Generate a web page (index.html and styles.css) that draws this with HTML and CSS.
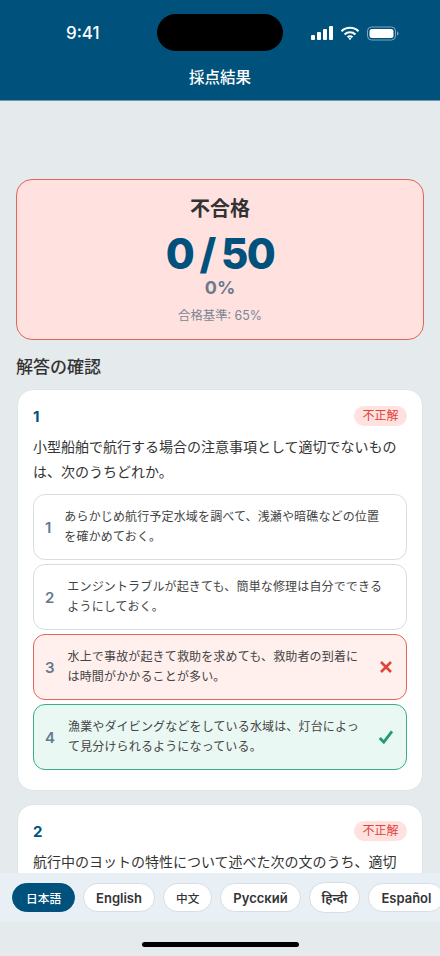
FILE: index.html
```html
<!DOCTYPE html>
<html lang="ja">
<head>
    <meta charset="UTF-8">
    <meta name="viewport" content="width=device-width, initial-scale=1.0">
    <title>採点結果</title>
    <link rel="stylesheet" href="styles.css">
</head>
<body>
    <div class="screen">
        <header class="app-header">
            <div class="status-bar">
                <span class="status-time">9:41</span>
                <div class="island"></div>
                <div class="status-icons">
                    <svg width="22" height="14" viewBox="0 0 22 14"><rect x="0" y="9" width="4" height="5" rx="1" fill="#fff"/><rect x="6" y="6" width="4" height="8" rx="1" fill="#fff"/><rect x="12" y="3" width="4" height="11" rx="1" fill="#fff"/><rect x="18" y="0" width="4" height="14" rx="1" fill="#fff"/></svg>
                    <svg width="20" height="15" viewBox="0 0 20 15"><path d="M1.5 5.2a12.2 12.2 0 0 1 17 0M4.6 8.4a7.8 7.8 0 0 1 10.8 0M7.6 11.3a3.4 3.4 0 0 1 4.8 0" fill="none" stroke="#fff" stroke-width="2.1"/><path d="M8.6 12.4a2 2 0 0 1 2.8 0L10 14.2z" fill="#fff"/></svg>
                    <svg width="32" height="15" viewBox="0 0 32 15"><rect x="0.5" y="1" width="28" height="13" rx="4" fill="none" stroke="#7fa6bd"/><rect x="2.5" y="3" width="24" height="9" rx="2.5" fill="#fff"/><path d="M30 5.5c1 .3 1.5 1 1.5 2s-.5 1.7-1.5 2z" fill="#7fa6bd"/></svg>
                </div>
            </div>
            <h1 class="app-title">採点結果</h1>
        </header>

        <main class="content">
            <section class="result-card">
                <h2 class="result-label">不合格</h2>
                <div class="result-score">0 / 50</div>
                <div class="result-percent">0%</div>
                <div class="result-note">合格基準: 65%</div>
            </section>

            <h3 class="section-title">解答の確認</h3>

            <article class="question">
                <div class="question-head">
                    <span class="question-no">1</span>
                    <span class="badge">不正解</span>
                </div>
                <p class="question-text">小型船舶で航行する場合の注意事項として適切でないものは、次のうちどれか。</p>
                <div class="choices">
                    <div class="choice">
                        <span class="choice-no">1</span>
                        <span class="choice-text">あらかじめ航行予定水域を調べて、浅瀬や暗礁などの位置を確かめておく。</span>
                    </div>
                    <div class="choice">
                        <span class="choice-no">2</span>
                        <span class="choice-text">エンジントラブルが起きても、簡単な修理は自分でできるようにしておく。</span>
                    </div>
                    <div class="choice wrong">
                        <span class="choice-no">3</span>
                        <span class="choice-text">水上で事故が起きて救助を求めても、救助者の到着には時間がかかることが多い。</span>
                        <svg class="mark" width="16" height="16" viewBox="0 0 16 16"><path d="M3 3l10 10M13 3L3 13" fill="none" stroke="#e04438" stroke-width="2.6"/></svg>
                    </div>
                    <div class="choice correct">
                        <span class="choice-no">4</span>
                        <span class="choice-text">漁業やダイビングなどをしている水域は、灯台によって見分けられるようになっている。</span>
                        <svg class="mark" width="16" height="16" viewBox="0 0 16 16"><path d="M1.8 9l4 4.2L14 2.4" fill="none" stroke="#1f9d68" stroke-width="2.8"/></svg>
                    </div>
                </div>
            </article>

            <article class="question">
                <div class="question-head">
                    <span class="question-no">2</span>
                    <span class="badge">不正解</span>
                </div>
                <p class="question-text">航行中のヨットの特性について述べた次の文のうち、適切</p>
            </article>
        </main>

        <nav class="lang-bar">
            <span class="lang active cjk">日本語</span>
            <span class="lang">English</span>
            <span class="lang cjk">中文</span>
            <span class="lang">Русский</span>
            <span class="lang tall">हिन्दी</span>
            <span class="lang">Español</span>
        </nav>
        <div class="home-area"><div class="home-indicator"></div></div>
    </div>
</body>
</html>
```

FILE: styles.css
```css
* {
    box-sizing: border-box;
}
html, body {
    margin: 0;
    padding: 0;
}
body {
    font-family: Inter, "Noto Sans CJK JP", "Noto Sans", sans-serif;
    color: #333;
    background-color: #e5eaed;
}
.screen {
    width: 440px;
    height: 956px;
    display: flex;
    flex-direction: column;
    overflow: hidden;
}
.app-header {
    height: 101px;
    flex-shrink: 0;
    background-color: #00527c;
    border-bottom: 1px solid #6d97ad;
    color: #fff;
}
.status-bar {
    height: 64px;
    padding: 2px 41px 0 66px;
    display: flex;
    justify-content: space-between;
    align-items: center;
    position: relative;
}
.status-time {
    font-size: 17px;
    font-weight: 500;
}
.island {
    position: absolute;
    left: 157px;
    top: 14px;
    width: 126px;
    height: 37px;
    border-radius: 19px;
    background-color: #000;
}
.status-icons {
    display: flex;
    align-items: center;
    gap: 7px;
}
.app-title {
    margin: 0;
    font-size: 15.5px;
    font-weight: 500;
    line-height: 28px;
    text-align: center;
}
.content {
    flex: 1;
    min-height: 0;
    overflow: hidden;
    padding: 78px 16px 0;
}
.result-card {
    height: 161px;
    padding: 14px 16px;
    text-align: center;
    background-color: #ffe2df;
    border: 1px solid #e0655a;
    border-radius: 16px;
}
.result-label {
    margin: 0;
    font-size: 20px;
    font-weight: 700;
    line-height: 30px;
}
.result-score {
    margin-top: 7px;
    font-size: 42px;
    font-weight: 800;
    letter-spacing: -1.5px;
    word-spacing: -1.5px;
    line-height: 46px;
    color: #00527c;
}
.result-percent {
    font-size: 18px;
    font-weight: 700;
    line-height: 22px;
    color: #6b7a8d;
}
.result-note {
    margin-top: 8px;
    font-size: 12.4px;
    line-height: 18px;
    color: #7b8794;
}
.section-title {
    margin: 15px 0 10px;
    font-size: 17px;
    font-weight: 500;
    line-height: 24px;
}
.question {
    margin: 0 1px 13px;
    padding: 16px 15px 20px;
    background-color: #fff;
    border: 1px solid #dde4ea;
    border-radius: 16px;
}
.question-head {
    display: flex;
    justify-content: space-between;
    align-items: center;
    height: 20px;
}
.question-no {
    font-size: 15px;
    font-weight: 700;
    color: #00527c;
}
.badge {
    padding: 0 8.5px;
    font-size: 12px;
    line-height: 20px;
    color: #e04438;
    background-color: #ffe2df;
    border-radius: 10px;
}
.question-text {
    margin: 8px 0 10px;
    font-size: 14px;
    line-height: 25px;
    color: #333;
}
.choices {
    display: flex;
    flex-direction: column;
    gap: 4px;
}
.choice {
    height: 66px;
    padding: 0 12px 0 11px;
    display: flex;
    align-items: center;
    gap: 13px;
    background-color: #fff;
    border: 1px solid #d5dee5;
    border-radius: 12px;
}
.choice.wrong {
    background-color: #ffefed;
    border-color: #e0655a;
}
.choice.correct {
    background-color: #e9f8f2;
    border-color: #3bae84;
}
.choice-no {
    flex-shrink: 0;
    font-size: 15px;
    font-weight: 600;
    color: #64788f;
}
.choice-text {
    flex: 1;
    padding-right: 4px;
    font-size: 12px;
    letter-spacing: 0.15px;
    line-height: 20px;
    color: #444;
}
.mark {
    flex-shrink: 0;
}
.lang-bar {
    height: 49px;
    flex-shrink: 0;
    padding: 0 12px;
    display: flex;
    align-items: center;
    gap: 8px;
    overflow: hidden;
    background-color: #e8eff5;
}
.lang {
    height: 29px;
    padding: 0 12px;
    flex-shrink: 0;
    display: flex;
    align-items: center;
    font-size: 13px;
    font-weight: 600;
    color: #333;
    background-color: #fff;
    border: 1px solid #d5dee5;
    border-radius: 15px;
}
.lang.cjk {
    font-size: 11.7px;
    font-weight: 500;
}
.lang.tall {
    height: 31px;
    border-radius: 16px;
}
.lang.active {
    padding: 0 13px;
    color: #fff;
    background-color: #00527c;
    border-color: #00527c;
}
.home-area {
    height: 34px;
    flex-shrink: 0;
    display: flex;
    justify-content: center;
    padding-top: 20px;
}
.home-indicator {
    width: 157px;
    height: 5px;
    border-radius: 3px;
    background-color: #000;
}
```
